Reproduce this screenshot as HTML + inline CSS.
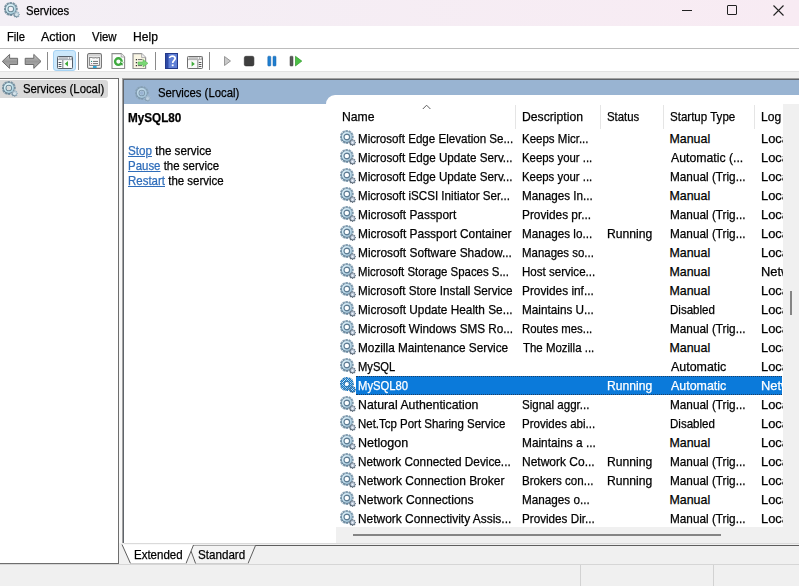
<!DOCTYPE html>
<html><head><meta charset="utf-8">
<style>
*{box-sizing:border-box}
html,body{margin:0;padding:0}
body{width:799px;height:586px;overflow:hidden;position:relative;background:#f0f0f0;font-family:"Liberation Sans",sans-serif;font-size:11.65px;color:#000;-webkit-text-stroke-width:0.15px}
.abs{position:absolute}
svg{position:absolute;overflow:visible}
#title{position:absolute;left:0;top:0;width:799px;height:26px;background:linear-gradient(90deg,#f3eff5,#f8ebf3)}
#menu{position:absolute;left:0;top:26px;width:799px;height:22px;background:#fff}
#menuline{position:absolute;left:0;top:48px;width:799px;height:1px;background:#bcbcbc}
#toolbar{position:absolute;left:0;top:49px;width:799px;height:22px;background:#fff}
#tbline{position:absolute;left:0;top:71px;width:799px;height:1px;background:#e3e3e3}
.txt{position:absolute;white-space:pre;line-height:16px;font-size:12.4px;transform-origin:0 0;-webkit-text-stroke-width:0.25px}
.sep{position:absolute;top:52px;width:1px;height:18px;background:#8a8a8a}
/* panes */
#leftpane{position:absolute;left:0;top:78px;width:119px;height:486px;background:#fff;border-top:1px solid #6e6e6e;border-right:1px solid #6e6e6e;border-bottom:1px solid #6e6e6e}
#rightpane{position:absolute;left:122px;top:78px;width:677px;height:465px;background:#fff;border-top:1px solid #a2a2a2;border-left:1px solid #a2a2a2;box-shadow:inset 1px 1px 0 #5f646a}
#gapstrip{position:absolute;left:119px;top:79px;width:3px;height:464px;background:#f8f8f8}
#bluebar{position:absolute;left:124px;top:80px;width:675px;height:24px;background:#99b4d2}
#listpanel{position:absolute;left:326px;top:95px;width:473px;height:432px;background:#fff;border-top-left-radius:9px;overflow:hidden}
.hdrdiv{position:absolute;top:105px;width:1px;height:24px;background:#e5e5e5}
.row{position:absolute;left:326px;width:457px;height:19px;overflow:hidden}
.row span{position:absolute;top:1px;line-height:19px;white-space:pre;font-size:12.4px;transform:scaleX(0.94);transform-origin:0 0;-webkit-text-stroke-width:0.25px}
.row .ic{left:14px;top:1px}
.c1{left:32.5px}
.c2{left:196.5px}
.c3{left:281px}
.c4{left:344px}
.c5{left:435px}
.selbg{position:absolute;left:30px;top:0;width:426px;height:19px;background:#0b7ada;border-top:1px dotted #1d3f66;border-bottom:1px dotted #1d3f66}
.sel span{color:#fff;-webkit-text-stroke-color:#fff}
#vscroll{position:absolute;left:783px;top:104px;width:16px;height:423px;background:#f0f0f0}
#vthumb{position:absolute;left:790px;top:291px;width:2px;height:24px;background:#858585}
#hscroll{position:absolute;left:336px;top:527px;width:463px;height:17px;background:#f0f0f0}
#hthumb{position:absolute;left:353px;top:534px;width:368px;height:2px;background:#858585}
#tabline{position:absolute;left:123px;top:544px;width:676px;height:1px;background:#6b6b6b}
#statline{position:absolute;left:0;top:564px;width:799px;height:1px;background:#d6d6d6}
.sdiv{position:absolute;top:565px;width:1px;height:21px;background:#d2d2d2}
a{color:#0b5fb5}
.link{text-decoration:underline;color:#2f6dba;-webkit-text-stroke-color:#2f6dba}
</style></head><body>
<svg width="0" height="0" style="position:absolute">
<defs>
<radialGradient id="gg" cx="0.42" cy="0.4" r="0.62">
<stop offset="0" stop-color="#ffffff"/><stop offset="0.6" stop-color="#d0eaf6"/><stop offset="1" stop-color="#9cc0d6"/>
</radialGradient>
<linearGradient id="gt" x1="0.8" y1="0" x2="0.2" y2="1">
<stop offset="0" stop-color="#a3bbcc"/><stop offset="1" stop-color="#557389"/>
</linearGradient>
<linearGradient id="gs" x1="0.8" y1="0.1" x2="0.2" y2="0.9">
<stop offset="0" stop-color="#8d9cab"/><stop offset="1" stop-color="#4a5763"/>
</linearGradient>
<radialGradient id="lg" cx="0.42" cy="0.4" r="0.62">
<stop offset="0" stop-color="#f2fbfd"/><stop offset="0.6" stop-color="#d2eef5"/><stop offset="1" stop-color="#9fc8da"/>
</radialGradient>
<linearGradient id="lt" x1="0.8" y1="0" x2="0.2" y2="1">
<stop offset="0" stop-color="#8fa8b6"/><stop offset="1" stop-color="#5c7686"/>
</linearGradient>
<linearGradient id="ls" x1="0.8" y1="0.1" x2="0.2" y2="0.9">
<stop offset="0" stop-color="#b9cfdc"/><stop offset="1" stop-color="#6f8797"/>
</linearGradient>
<mask id="holem" maskUnits="userSpaceOnUse" x="0" y="0" width="16" height="16"><rect width="16" height="16" fill="#fff"/><circle cx="6.8" cy="7" r="2.0" fill="#000"/></mask>
<symbol id="gear" viewBox="0 0 16 16">
<g mask="url(#holem)">
<g transform="translate(6.8 7)" fill="url(#gt)"><rect x="-1.3" y="-7" width="2.6" height="2.4" transform="rotate(0)"/><rect x="-1.3" y="-7" width="2.6" height="2.4" transform="rotate(30)"/><rect x="-1.3" y="-7" width="2.6" height="2.4" transform="rotate(60)"/><rect x="-1.3" y="-7" width="2.6" height="2.4" transform="rotate(90)"/><rect x="-1.3" y="-7" width="2.6" height="2.4" transform="rotate(120)"/><rect x="-1.3" y="-7" width="2.6" height="2.4" transform="rotate(150)"/><rect x="-1.3" y="-7" width="2.6" height="2.4" transform="rotate(180)"/><rect x="-1.3" y="-7" width="2.6" height="2.4" transform="rotate(210)"/><rect x="-1.3" y="-7" width="2.6" height="2.4" transform="rotate(240)"/><rect x="-1.3" y="-7" width="2.6" height="2.4" transform="rotate(270)"/><rect x="-1.3" y="-7" width="2.6" height="2.4" transform="rotate(300)"/><rect x="-1.3" y="-7" width="2.6" height="2.4" transform="rotate(330)"/><circle r="5.5"/></g>
<circle cx="6.8" cy="7" r="5.0" fill="url(#gg)"/>
<circle cx="6.8" cy="7" r="2.75" fill="none" stroke="#5f7d94" stroke-width="1.3"/>
</g>
<g transform="translate(12.5 12.6)" fill="url(#gs)"><rect x="-0.7" y="-3.5" width="1.4" height="1.6" transform="rotate(0)"/><rect x="-0.7" y="-3.5" width="1.4" height="1.6" transform="rotate(45)"/><rect x="-0.7" y="-3.5" width="1.4" height="1.6" transform="rotate(90)"/><rect x="-0.7" y="-3.5" width="1.4" height="1.6" transform="rotate(135)"/><rect x="-0.7" y="-3.5" width="1.4" height="1.6" transform="rotate(180)"/><rect x="-0.7" y="-3.5" width="1.4" height="1.6" transform="rotate(225)"/><rect x="-0.7" y="-3.5" width="1.4" height="1.6" transform="rotate(270)"/><rect x="-0.7" y="-3.5" width="1.4" height="1.6" transform="rotate(315)"/><circle r="2.6"/></g>
<circle cx="12.5" cy="12.6" r="2.0" fill="#bccadb"/>
<circle cx="12.5" cy="12.6" r="0.9" fill="#f2f6fa"/>
</symbol>
<symbol id="gearl" viewBox="0 0 16 16">
<g mask="url(#holem)">
<g transform="translate(6.8 7)" fill="url(#lt)"><rect x="-1.3" y="-7" width="2.6" height="2.4" transform="rotate(0)"/><rect x="-1.3" y="-7" width="2.6" height="2.4" transform="rotate(30)"/><rect x="-1.3" y="-7" width="2.6" height="2.4" transform="rotate(60)"/><rect x="-1.3" y="-7" width="2.6" height="2.4" transform="rotate(90)"/><rect x="-1.3" y="-7" width="2.6" height="2.4" transform="rotate(120)"/><rect x="-1.3" y="-7" width="2.6" height="2.4" transform="rotate(150)"/><rect x="-1.3" y="-7" width="2.6" height="2.4" transform="rotate(180)"/><rect x="-1.3" y="-7" width="2.6" height="2.4" transform="rotate(210)"/><rect x="-1.3" y="-7" width="2.6" height="2.4" transform="rotate(240)"/><rect x="-1.3" y="-7" width="2.6" height="2.4" transform="rotate(270)"/><rect x="-1.3" y="-7" width="2.6" height="2.4" transform="rotate(300)"/><rect x="-1.3" y="-7" width="2.6" height="2.4" transform="rotate(330)"/><circle r="5.5"/></g>
<circle cx="6.8" cy="7" r="5.0" fill="url(#lg)"/>
<circle cx="6.8" cy="7" r="2.8" fill="none" stroke="#6f8a98" stroke-width="1.1"/>
</g>
<g transform="translate(12.5 12.6)" fill="url(#ls)"><rect x="-0.7" y="-3.5" width="1.4" height="1.6" transform="rotate(0)"/><rect x="-0.7" y="-3.5" width="1.4" height="1.6" transform="rotate(45)"/><rect x="-0.7" y="-3.5" width="1.4" height="1.6" transform="rotate(90)"/><rect x="-0.7" y="-3.5" width="1.4" height="1.6" transform="rotate(135)"/><rect x="-0.7" y="-3.5" width="1.4" height="1.6" transform="rotate(180)"/><rect x="-0.7" y="-3.5" width="1.4" height="1.6" transform="rotate(225)"/><rect x="-0.7" y="-3.5" width="1.4" height="1.6" transform="rotate(270)"/><rect x="-0.7" y="-3.5" width="1.4" height="1.6" transform="rotate(315)"/><circle r="2.6"/></g>
<circle cx="12.5" cy="12.6" r="1.6" fill="#d5e3ea"/>
</symbol>
<pattern id="dith" width="2" height="2" patternUnits="userSpaceOnUse"><rect width="1" height="1" fill="#0078d7"/><rect x="1" y="1" width="1" height="1" fill="#0078d7"/></pattern>
<mask id="gmask" maskUnits="userSpaceOnUse" x="0" y="0" width="16" height="16">
<g transform="translate(6.8 7)" fill="#fff"><rect x="-1.3" y="-7" width="2.6" height="2.4" transform="rotate(0)"/><rect x="-1.3" y="-7" width="2.6" height="2.4" transform="rotate(30)"/><rect x="-1.3" y="-7" width="2.6" height="2.4" transform="rotate(60)"/><rect x="-1.3" y="-7" width="2.6" height="2.4" transform="rotate(90)"/><rect x="-1.3" y="-7" width="2.6" height="2.4" transform="rotate(120)"/><rect x="-1.3" y="-7" width="2.6" height="2.4" transform="rotate(150)"/><rect x="-1.3" y="-7" width="2.6" height="2.4" transform="rotate(180)"/><rect x="-1.3" y="-7" width="2.6" height="2.4" transform="rotate(210)"/><rect x="-1.3" y="-7" width="2.6" height="2.4" transform="rotate(240)"/><rect x="-1.3" y="-7" width="2.6" height="2.4" transform="rotate(270)"/><rect x="-1.3" y="-7" width="2.6" height="2.4" transform="rotate(300)"/><rect x="-1.3" y="-7" width="2.6" height="2.4" transform="rotate(330)"/><circle r="5.5"/></g>
<circle cx="6.8" cy="7" r="2.0" fill="#000"/>
<g transform="translate(12.5 12.6)" fill="#fff"><rect x="-0.7" y="-3.5" width="1.4" height="1.6" transform="rotate(0)"/><rect x="-0.7" y="-3.5" width="1.4" height="1.6" transform="rotate(45)"/><rect x="-0.7" y="-3.5" width="1.4" height="1.6" transform="rotate(90)"/><rect x="-0.7" y="-3.5" width="1.4" height="1.6" transform="rotate(135)"/><rect x="-0.7" y="-3.5" width="1.4" height="1.6" transform="rotate(180)"/><rect x="-0.7" y="-3.5" width="1.4" height="1.6" transform="rotate(225)"/><rect x="-0.7" y="-3.5" width="1.4" height="1.6" transform="rotate(270)"/><rect x="-0.7" y="-3.5" width="1.4" height="1.6" transform="rotate(315)"/><circle r="2.6"/></g>
</mask>
<symbol id="gears" viewBox="0 0 16 16">
<use href="#gear"/>
<rect x="0" y="0" width="16" height="16" fill="url(#dith)" mask="url(#gmask)"/>
</symbol>
</defs>
</svg>

<!-- title bar -->
<div id="title"></div>
<svg style="left:4px;top:2px" width="16" height="16" viewBox="0 0 16 16"><use href="#gearl"/></svg>
<div class="txt" style="left:26.29px;top:3px;transform:scaleX(0.9087)">Services</div>
<!-- window controls -->
<div class="abs" style="left:682px;top:10px;width:10px;height:1px;background:#222"></div>
<div class="abs" style="left:727px;top:5px;width:10px;height:10px;border:1px solid #222;border-radius:1px"></div>
<svg style="left:773px;top:5px" width="11" height="11" viewBox="0 0 11 11"><path d="M0.5 0.5L10.5 10.5M10.5 0.5L0.5 10.5" stroke="#222" stroke-width="1.1"/></svg>

<!-- menu -->
<div id="menu"></div>
<div class="txt" style="left:6.89px;top:29px;transform:scaleX(0.9053)">File</div>
<div class="txt" style="left:41.0px;top:29px;transform:scaleX(1.0059)">Action</div>
<div class="txt" style="left:92.0px;top:29px;transform:scaleX(0.9185)">View</div>
<div class="txt" style="left:132.83px;top:29px;transform:scaleX(0.975)">Help</div>
<div id="menuline"></div>

<!-- toolbar -->
<div id="toolbar"></div>
<div id="tbline"></div>
<!-- back -->
<svg style="left:0;top:50px" width="45" height="22" viewBox="0 50 45 22">
<defs><linearGradient id="ag" x1="0" y1="0" x2="0" y2="1"><stop offset="0" stop-color="#c9c9c9"/><stop offset="0.5" stop-color="#979797"/><stop offset="1" stop-color="#b5b5b5"/></linearGradient></defs>
<path d="M2.3 61.4L9.6 54.4V58.3H17.6V64.5H9.6V68.4Z" fill="url(#ag)" stroke="#6a6a6a" stroke-width="1" stroke-linejoin="round"/>
<path d="M41 61.4L33.8 54.4V58.3H25.2V64.5H33.8V68.4Z" fill="url(#ag)" stroke="#6a6a6a" stroke-width="1" stroke-linejoin="round"/>
</svg>
<div class="sep" style="left:47px"></div>
<!-- active button -->
<div class="abs" style="left:53px;top:50px;width:23px;height:21px;background:#cce8fb;border:1px solid #a6d3f4;border-radius:3px"></div>
<svg style="left:57px;top:56px" width="16" height="13" viewBox="0 0 16 13">
<rect x="0.5" y="0.5" width="15" height="12" rx="0.8" fill="#fafbfc" stroke="#56606b" stroke-width="1"/>
<rect x="1.6" y="1.5" width="9.6" height="1.1" fill="#8d96a0"/>
<rect x="12" y="1.5" width="1.1" height="1.1" fill="#6f7882"/><rect x="13.8" y="1.5" width="1.1" height="1.1" fill="#6f7882"/>
<rect x="1" y="3.3" width="14" height="0.8" fill="#8d96a0"/>
<rect x="5.4" y="4" width="0.9" height="8.5" fill="#6a737d"/>
<rect x="1.6" y="6" width="2.8" height="1" fill="#4f5964"/><rect x="1.6" y="8" width="2.8" height="1" fill="#4f5964"/><rect x="1.6" y="10" width="2.8" height="1" fill="#4f5964"/>
<path d="M7.8 7.8L11 5V10.6Z" fill="#3faa3a"/>
</svg>
<div class="sep" style="left:78px"></div>
<!-- properties -->
<svg style="left:87px;top:53px" width="15" height="16" viewBox="0 0 15 16">
<rect x="0.6" y="0.6" width="13.8" height="14.8" rx="1.5" fill="#f6f6f6" stroke="#727272" stroke-width="1.1"/>
<rect x="1.5" y="1.6" width="12" height="1.6" fill="#d2d2d2"/>
<rect x="2.6" y="4.4" width="9.8" height="8" fill="#fbfbfb" stroke="#7b7b7b" stroke-width="0.9"/>
<rect x="5.3" y="4.6" width="2.6" height="1.4" fill="#c9c9c9"/><rect x="8.6" y="4.6" width="2.6" height="1.4" fill="#c9c9c9"/>
<rect x="4" y="7.9" width="1.1" height="1.1" fill="#2d8f7e"/><rect x="6" y="7.9" width="5" height="1.1" fill="#7d7d7d"/>
<rect x="4" y="10" width="1.1" height="1.1" fill="#a07d8a"/><rect x="6" y="10" width="5" height="1.1" fill="#7d7d7d"/>
<rect x="6" y="13" width="3.6" height="2" fill="#2ea5d6"/>
</svg>
<!-- refresh -->
<svg style="left:111px;top:53px" width="15" height="16" viewBox="0 0 15 16">
<path d="M1 0.6H10.2L13.6 4V15.5H1Z" fill="#fdfdfd" stroke="#8d8d8d" stroke-width="1.1"/>
<path d="M10.2 0.6V4H13.6" fill="#eee" stroke="#9a9a9a" stroke-width="0.8"/>
<circle cx="7.4" cy="8.6" r="3.3" fill="none" stroke="#3faa3f" stroke-width="2.4"/>
<path d="M9.5 9.2L12.6 9.2L11 13Z" fill="#2c962c"/>
<path d="M9.6 8.8L11.8 8.8L11.8 11" fill="#fdfdfd"/>
</svg>
<!-- export -->
<svg style="left:132px;top:53px" width="17" height="16" viewBox="0 0 17 16">
<path d="M1 0.6H9.6L13.6 4.6V15.5H1Z" fill="#faf6e4" stroke="#939393" stroke-width="1.2"/>
<path d="M9.6 0.6V4.6H13.6" fill="#eee" stroke="#a0a0a0" stroke-width="0.8"/>
<rect x="3.8" y="6" width="1.3" height="1.3" fill="#333"/><rect x="6" y="6.1" width="4.5" height="1" fill="#666"/>
<rect x="3.8" y="9" width="1.3" height="1.3" fill="#333"/>
<rect x="3.8" y="12" width="1.3" height="1.3" fill="#3b2f2a"/><rect x="6" y="12.1" width="4" height="1" fill="#666"/>
<path d="M6 8.9H11V6.6L16 10.3L11 14V11.7H6Z" fill="#79d774" stroke="#52b24d" stroke-width="0.5"/>
</svg>
<div class="sep" style="left:155px"></div>
<!-- help -->
<svg style="left:165px;top:53px" width="13" height="16" viewBox="0 0 13 16">
<rect x="0.5" y="0.5" width="12" height="15" fill="#5f7fd6" stroke="#23398a"/>
<rect x="1" y="1" width="2.5" height="14" fill="#2e4aa6"/>
<path d="M4.6 5C4.6 2.6 10.4 2.4 10.2 5.4C10.1 7.3 7.7 7.4 7.7 10" fill="none" stroke="#fff" stroke-width="1.7"/>
<rect x="6.8" y="11.4" width="1.8" height="1.8" fill="#fff"/>
</svg>
<!-- show action pane -->
<svg style="left:187px;top:56px" width="16" height="13" viewBox="0 0 16 13">
<rect x="0.5" y="0.5" width="15" height="12" rx="0.8" fill="#fafafa" stroke="#6f6f6f" stroke-width="1"/>
<rect x="1.6" y="1.5" width="9.6" height="1.1" fill="#9a9a9a"/>
<rect x="12" y="1.5" width="1.1" height="1.1" fill="#7a7a7a"/><rect x="13.8" y="1.5" width="1.1" height="1.1" fill="#7a7a7a"/>
<rect x="1" y="3.3" width="14" height="0.8" fill="#9a9a9a"/>
<rect x="10.4" y="4" width="0.9" height="8.5" fill="#777"/>
<rect x="11.8" y="6" width="2.6" height="1" fill="#555"/><rect x="11.8" y="8" width="2.6" height="1" fill="#555"/><rect x="11.8" y="10" width="2.6" height="1" fill="#555"/>
<path d="M4.6 5.2L7.8 7.9L4.6 10.6Z" fill="#3faa3a"/>
</svg>
<div class="sep" style="left:209px"></div>
<!-- play / stop / pause / resume -->
<svg style="left:220px;top:54px" width="90" height="14" viewBox="220 54 90 14">
<path d="M224.5 56.5L230.5 61L224.5 65.5Z" fill="#c9c9c9" stroke="#8e8e8e" stroke-width="0.9"/>
<rect x="244.3" y="56.3" width="9.6" height="9.6" rx="1.6" fill="#3f3f3f" stroke="#2d2d2d" stroke-width="0.6"/>
<rect x="267.8" y="56.2" width="3" height="9.8" rx="0.8" fill="#1f7fd0" stroke="#1661a8" stroke-width="0.5"/>
<rect x="273" y="56.2" width="3" height="9.8" rx="0.8" fill="#1f7fd0" stroke="#1661a8" stroke-width="0.5"/>
<rect x="290" y="56.2" width="3" height="9.8" rx="0.8" fill="#5a5a5a" stroke="#3d3d3d" stroke-width="0.5"/>
<path d="M295.5 56.3L301.8 61.1L295.5 65.9Z" fill="#4cc046" stroke="#2f9a2a" stroke-width="0.7"/>
</svg>

<!-- left tree pane -->
<div id="leftpane"></div>
<div class="abs" style="left:0;top:80px;width:108px;height:18px;background:#d9d9d9;border-radius:0 3px 3px 0"></div>
<svg style="left:2px;top:81px" width="16" height="16" viewBox="0 0 16 16"><use href="#gearl"/></svg>
<div class="txt" style="left:22.79px;top:81px;transform:scaleX(0.9138)">Services (Local)</div>

<!-- right pane -->
<div id="rightpane"></div><div id="gapstrip"></div>
<div id="bluebar"></div>
<svg style="left:135px;top:86px;opacity:0.6" width="16" height="16" viewBox="0 0 16 16"><use href="#gearl"/></svg>
<div class="txt" style="left:158.49px;top:85px;transform:scaleX(0.9149)">Services (Local)</div>

<!-- description pane -->
<div class="txt" style="left:128.45px;top:110px;transform:scaleX(0.9455);font-weight:bold">MySQL80</div>
<div class="txt" style="left:128.36px;top:143px;transform:scaleX(0.9398)"><span class="link">Stop</span> the service</div>
<div class="txt" style="left:128.38px;top:158px;transform:scaleX(0.9247)"><span class="link">Pause</span> the service</div>
<div class="txt" style="left:128.37px;top:173px;transform:scaleX(0.9265)"><span class="link">Restart</span> the service</div>

<!-- list -->
<div id="listpanel"></div>
<svg style="left:422px;top:104px" width="10" height="6" viewBox="0 0 10 6"><path d="M0.8 5L4.6 1.2L8.4 5" fill="none" stroke="#5c5c5c" stroke-width="1"/></svg>
<div class="txt" style="left:341.52px;top:109px;transform:scaleX(0.9844)">Name</div>
<div class="hdrdiv" style="left:515px"></div>
<div class="txt" style="left:521.52px;top:109px;transform:scaleX(0.9833)">Description</div>
<div class="hdrdiv" style="left:600px"></div>
<div class="txt" style="left:606.58px;top:109px;transform:scaleX(0.9191)">Status</div>
<div class="hdrdiv" style="left:663px"></div>
<div class="txt" style="left:669.82px;top:109px;transform:scaleX(0.9312)">Startup Type</div>
<div class="hdrdiv" style="left:754px"></div>
<div class="txt" style="left:761.03px;top:109px;transform:scaleX(0.9737)">Log</div>
<div class="row" style="top:129px"><svg class="ic" width="16" height="16" viewBox="0 0 16 16"><use href="#gear"/></svg><span style="left:32.07px;transform:scaleX(0.9348)">Microsoft Edge Elevation Se...</span><span style="left:195.77px;transform:scaleX(0.9286)">Keeps Micr...</span><span style="left:343.5px;transform:scaleX(1.0)">Manual</span><span style="left:434.76px;transform:scaleX(1.04)">Local System</span></div>
<div class="row" style="top:148px"><svg class="ic" width="16" height="16" viewBox="0 0 16 16"><use href="#gear"/></svg><span style="left:32.06px;transform:scaleX(0.9405)">Microsoft Edge Update Serv...</span><span style="left:195.78px;transform:scaleX(0.9187)">Keeps your ...</span><span style="left:344.5px;transform:scaleX(0.9903)">Automatic (...</span><span style="left:434.76px;transform:scaleX(1.04)">Local System</span></div>
<div class="row" style="top:167px"><svg class="ic" width="16" height="16" viewBox="0 0 16 16"><use href="#gear"/></svg><span style="left:32.06px;transform:scaleX(0.9405)">Microsoft Edge Update Serv...</span><span style="left:195.78px;transform:scaleX(0.9187)">Keeps your ...</span><span style="left:343.55px;transform:scaleX(0.95)">Manual (Trig...</span><span style="left:434.76px;transform:scaleX(1.04)">Local System</span></div>
<div class="row" style="top:186px"><svg class="ic" width="16" height="16" viewBox="0 0 16 16"><use href="#gear"/></svg><span style="left:32.06px;transform:scaleX(0.9387)">Microsoft iSCSI Initiator Ser...</span><span style="left:195.76px;transform:scaleX(0.9438)">Manages In...</span><span style="left:343.5px;transform:scaleX(1.0)">Manual</span><span style="left:434.76px;transform:scaleX(1.04)">Local System</span></div>
<div class="row" style="top:205px"><svg class="ic" width="16" height="16" viewBox="0 0 16 16"><use href="#gear"/></svg><span style="left:32.04px;transform:scaleX(0.9578)">Microsoft Passport</span><span style="left:195.74px;transform:scaleX(0.9557)">Provides pr...</span><span style="left:343.55px;transform:scaleX(0.95)">Manual (Trig...</span><span style="left:434.76px;transform:scaleX(1.04)">Local System</span></div>
<div class="row" style="top:224px"><svg class="ic" width="16" height="16" viewBox="0 0 16 16"><use href="#gear"/></svg><span style="left:32.04px;transform:scaleX(0.961)">Microsoft Passport Container</span><span style="left:195.76px;transform:scaleX(0.9438)">Manages lo...</span><span style="left:280.62px;transform:scaleX(0.98)">Running</span><span style="left:343.55px;transform:scaleX(0.95)">Manual (Trig...</span><span style="left:434.76px;transform:scaleX(1.04)">Local Service</span></div>
<div class="row" style="top:243px"><svg class="ic" width="16" height="16" viewBox="0 0 16 16"><use href="#gear"/></svg><span style="left:32.04px;transform:scaleX(0.9585)">Microsoft Software Shadow...</span><span style="left:195.78px;transform:scaleX(0.9237)">Manages so...</span><span style="left:343.5px;transform:scaleX(1.0)">Manual</span><span style="left:434.76px;transform:scaleX(1.04)">Local System</span></div>
<div class="row" style="top:262px"><svg class="ic" width="16" height="16" viewBox="0 0 16 16"><use href="#gear"/></svg><span style="left:32.08px;transform:scaleX(0.921)">Microsoft Storage Spaces S...</span><span style="left:195.77px;transform:scaleX(0.9325)">Host service...</span><span style="left:343.5px;transform:scaleX(1.0)">Manual</span><span style="left:434.76px;transform:scaleX(1.04)">Network Service</span></div>
<div class="row" style="top:281px"><svg class="ic" width="16" height="16" viewBox="0 0 16 16"><use href="#gear"/></svg><span style="left:32.06px;transform:scaleX(0.9429)">Microsoft Store Install Service</span><span style="left:195.74px;transform:scaleX(0.9562)">Provides inf...</span><span style="left:343.5px;transform:scaleX(1.0)">Manual</span><span style="left:434.76px;transform:scaleX(1.04)">Local System</span></div>
<div class="row" style="top:300px"><svg class="ic" width="16" height="16" viewBox="0 0 16 16"><use href="#gear"/></svg><span style="left:32.05px;transform:scaleX(0.955)">Microsoft Update Health Se...</span><span style="left:195.75px;transform:scaleX(0.9486)">Maintains U...</span><span style="left:343.57px;transform:scaleX(0.9319)">Disabled</span><span style="left:434.76px;transform:scaleX(1.04)">Local System</span></div>
<div class="row" style="top:319px"><svg class="ic" width="16" height="16" viewBox="0 0 16 16"><use href="#gear"/></svg><span style="left:32.05px;transform:scaleX(0.9463)">Microsoft Windows SMS Ro...</span><span style="left:195.78px;transform:scaleX(0.9187)">Routes mes...</span><span style="left:343.55px;transform:scaleX(0.95)">Manual (Trig...</span><span style="left:434.76px;transform:scaleX(1.04)">Local Service</span></div>
<div class="row" style="top:338px"><svg class="ic" width="16" height="16" viewBox="0 0 16 16"><use href="#gear"/></svg><span style="left:32.05px;transform:scaleX(0.9519)">Mozilla Maintenance Service</span><span style="left:196.7px;transform:scaleX(0.9237)">The Mozilla ...</span><span style="left:343.5px;transform:scaleX(1.0)">Manual</span><span style="left:434.76px;transform:scaleX(1.04)">Local System</span></div>
<div class="row" style="top:357px"><svg class="ic" width="16" height="16" viewBox="0 0 16 16"><use href="#gear"/></svg><span style="left:32.1px;transform:scaleX(0.9025)">MySQL</span><span style="left:344.5px;transform:scaleX(1.0018)">Automatic</span><span style="left:434.76px;transform:scaleX(1.04)">Local System</span></div>
<div class="row sel" style="top:376px"><div class="selbg"></div><svg class="ic" width="16" height="16" viewBox="0 0 16 16"><use href="#gears"/></svg><span style="left:32.09px;transform:scaleX(0.9093)">MySQL80</span><span style="left:280.62px;transform:scaleX(0.98)">Running</span><span style="left:344.5px;transform:scaleX(1.0018)">Automatic</span><span style="left:434.76px;transform:scaleX(1.04)">Network Service</span></div>
<div class="row" style="top:395px"><svg class="ic" width="16" height="16" viewBox="0 0 16 16"><use href="#gear"/></svg><span style="left:32.01px;transform:scaleX(0.9933)">Natural Authentication</span><span style="left:195.77px;transform:scaleX(0.9324)">Signal aggr...</span><span style="left:343.55px;transform:scaleX(0.95)">Manual (Trig...</span><span style="left:434.76px;transform:scaleX(1.04)">Local System</span></div>
<div class="row" style="top:414px"><svg class="ic" width="16" height="16" viewBox="0 0 16 16"><use href="#gear"/></svg><span style="left:32.07px;transform:scaleX(0.9259)">Net.Tcp Port Sharing Service</span><span style="left:195.77px;transform:scaleX(0.9325)">Provides abi...</span><span style="left:343.57px;transform:scaleX(0.9319)">Disabled</span><span style="left:434.76px;transform:scaleX(1.04)">Local Service</span></div>
<div class="row" style="top:433px"><svg class="ic" width="16" height="16" viewBox="0 0 16 16"><use href="#gear"/></svg><span style="left:31.99px;transform:scaleX(1.0104)">Netlogon</span><span style="left:195.74px;transform:scaleX(0.9573)">Maintains a ...</span><span style="left:343.5px;transform:scaleX(1.0)">Manual</span><span style="left:434.76px;transform:scaleX(1.04)">Local System</span></div>
<div class="row" style="top:452px"><svg class="ic" width="16" height="16" viewBox="0 0 16 16"><use href="#gear"/></svg><span style="left:32.05px;transform:scaleX(0.9516)">Network Connected Device...</span><span style="left:195.73px;transform:scaleX(0.9685)">Network Co...</span><span style="left:280.62px;transform:scaleX(0.98)">Running</span><span style="left:343.55px;transform:scaleX(0.95)">Manual (Trig...</span><span style="left:434.76px;transform:scaleX(1.04)">Local Service</span></div>
<div class="row" style="top:471px"><svg class="ic" width="16" height="16" viewBox="0 0 16 16"><use href="#gear"/></svg><span style="left:32.03px;transform:scaleX(0.9662)">Network Connection Broker</span><span style="left:195.77px;transform:scaleX(0.9333)">Brokers con...</span><span style="left:280.62px;transform:scaleX(0.98)">Running</span><span style="left:343.55px;transform:scaleX(0.95)">Manual (Trig...</span><span style="left:434.76px;transform:scaleX(1.04)">Local System</span></div>
<div class="row" style="top:490px"><svg class="ic" width="16" height="16" viewBox="0 0 16 16"><use href="#gear"/></svg><span style="left:32.02px;transform:scaleX(0.981)">Network Connections</span><span style="left:195.75px;transform:scaleX(0.9457)">Manages o...</span><span style="left:343.5px;transform:scaleX(1.0)">Manual</span><span style="left:434.76px;transform:scaleX(1.04)">Local System</span></div>
<div class="row" style="top:509px"><svg class="ic" width="16" height="16" viewBox="0 0 16 16"><use href="#gear"/></svg><span style="left:32.04px;transform:scaleX(0.9637)">Network Connectivity Assis...</span><span style="left:195.76px;transform:scaleX(0.9427)">Provides Dir...</span><span style="left:343.55px;transform:scaleX(0.95)">Manual (Trig...</span><span style="left:434.76px;transform:scaleX(1.04)">Local System</span></div>
<div id="vscroll"></div>
<div id="vthumb"></div>
<div id="hscroll"></div>
<div id="hthumb"></div>

<!-- tabs -->
<div class="abs" style="left:124px;top:543px;width:675px;height:1px;background:#dadada"></div>
<div class="abs" style="left:193px;top:545px;width:606px;height:1px;background:#5e5e5e"></div>
<svg style="left:118px;top:544px" width="140" height="21" viewBox="118 544 140 21">
<path d="M188 545.5H255.5L248 563.5H195.6Z" fill="#f4f4f4"/>
<path d="M255.5 545.5L248 563.5" fill="none" stroke="#5e5e5e" stroke-width="1"/>
<path d="M248 563.5H195.6" fill="none" stroke="#cfcfcf" stroke-width="1"/>
<path d="M191 551L195.6 563.5" fill="none" stroke="#5e5e5e" stroke-width="1"/>
<path d="M122 544.5H193.5L186 563.5H130.5Z" fill="#fff"/>
<path d="M122 544.5L130.5 563.5M193.5 545L186 563.5" fill="none" stroke="#5e5e5e" stroke-width="1"/>
<path d="M130.5 563.5H186" fill="none" stroke="#cfcfcf" stroke-width="1"/>
</svg>
<div class="txt" style="left:133.77px;top:547px;transform:scaleX(0.9275)">Extended</div>
<div class="txt" style="left:197.56px;top:547px;transform:scaleX(0.9388)">Standard</div>

<!-- status bar -->
<div id="statline"></div>
<div class="sdiv" style="left:580px"></div>
<div class="sdiv" style="left:713px"></div>
</body></html>
